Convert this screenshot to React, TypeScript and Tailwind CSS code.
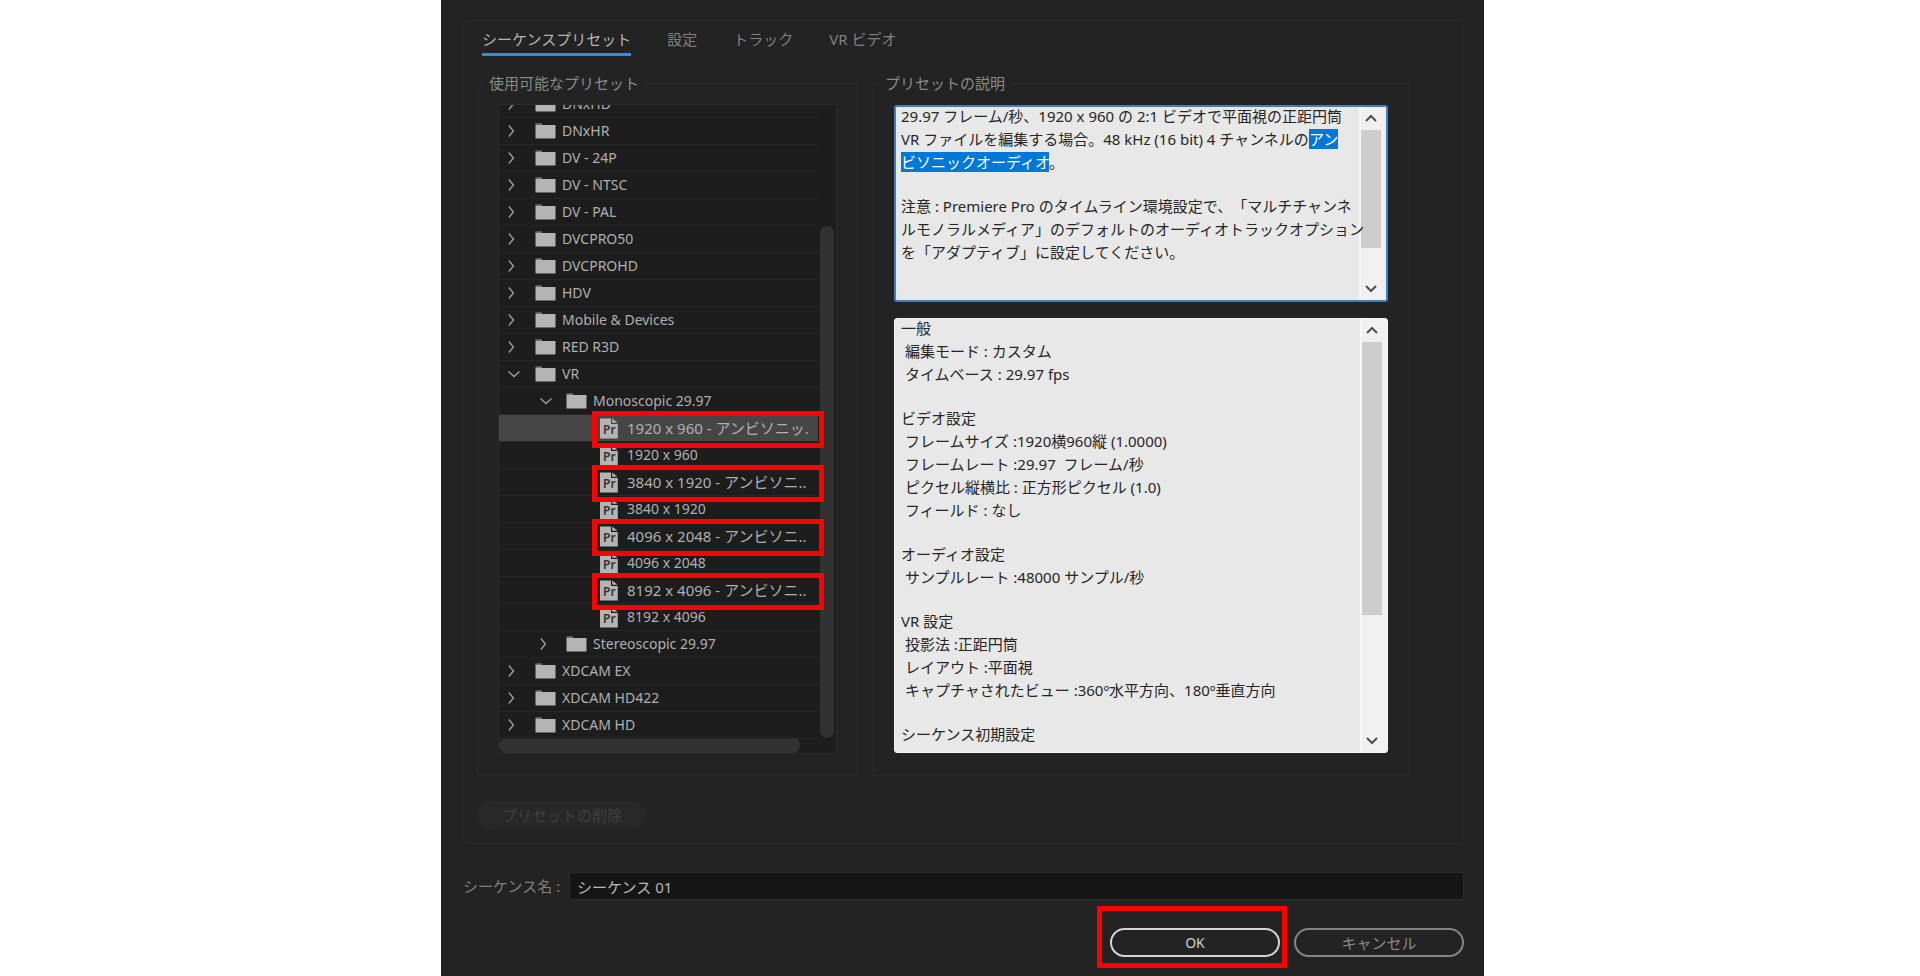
import { useState } from 'react';
import type { ReactNode } from 'react';
import clsx from 'clsx';

interface PresetRow {
  label: string;
  level: 0 | 1 | 2;
  open?: boolean;
  selected?: boolean;
  marked?: boolean;
}

const tabs = ['シーケンスプリセット', '設定', 'トラック', 'VR ビデオ'];

const presets: PresetRow[] = [
  { label: 'DNxHD', level: 0 },
  { label: 'DNxHR', level: 0 },
  { label: 'DV - 24P', level: 0 },
  { label: 'DV - NTSC', level: 0 },
  { label: 'DV - PAL', level: 0 },
  { label: 'DVCPRO50', level: 0 },
  { label: 'DVCPROHD', level: 0 },
  { label: 'HDV', level: 0 },
  { label: 'Mobile & Devices', level: 0 },
  { label: 'RED R3D', level: 0 },
  { label: 'VR', level: 0, open: true },
  { label: 'Monoscopic 29.97', level: 1, open: true },
  { label: '1920 x 960 - アンビソニッ.', level: 2, selected: true, marked: true },
  { label: '1920 x 960', level: 2 },
  { label: '3840 x 1920 - アンビソニ..', level: 2, marked: true },
  { label: '3840 x 1920', level: 2 },
  { label: '4096 x 2048 - アンビソニ..', level: 2, marked: true },
  { label: '4096 x 2048', level: 2 },
  { label: '8192 x 4096 - アンビソニ..', level: 2, marked: true },
  { label: '8192 x 4096', level: 2 },
  { label: 'Stereoscopic 29.97', level: 1 },
  { label: 'XDCAM EX', level: 0 },
  { label: 'XDCAM HD422', level: 0 },
  { label: 'XDCAM HD', level: 0 },
];

const details = [
  '一般',
  ' 編集モード : カスタム',
  ' タイムベース : 29.97 fps',
  '',
  'ビデオ設定',
  ' フレームサイズ :1920横960縦 (1.0000)',
  ' フレームレート :29.97  フレーム/秒',
  ' ピクセル縦横比 : 正方形ピクセル (1.0)',
  ' フィールド : なし',
  '',
  'オーディオ設定',
  ' サンプルレート :48000 サンプル/秒',
  '',
  'VR 設定',
  ' 投影法 :正距円筒',
  ' レイアウト :平面視',
  ' キャプチャされたビュー :360º水平方向、180º垂直方向',
  '',
  'シーケンス初期設定',
];

const indent = ['pl-[9px]', 'pl-[41px]', 'pl-[101px]'];

function Chevron({ open }: { open?: boolean }) {
  return (
    <svg className="w-3 h-3 shrink-0" viewBox="0 0 12 12" fill="none" stroke="#9c9c9c" strokeWidth="1.4">
      <path d={open ? 'M0.5 3.5L6 8.5L11.5 3.5' : 'M0.8 0.5L5.5 6L0.8 11.5'} />
    </svg>
  );
}

function FolderIcon() {
  return (
    <svg className="w-[21px] h-4 shrink-0" viewBox="0 0 21 16">
      <path d="M0.5 0.5h6.5v1.3h-6.5z" fill="#8d8d8d" />
      <path d="M0.5 2h20v13.5h-20z" fill="#b4b4b4" />
    </svg>
  );
}

function ProjectIcon() {
  return (
    <svg className="w-[18px] h-[21px] shrink-0" viewBox="0 0 18 21">
      <path d="M0 0.5h11v5.5h6.8v14.5h-17.8z" fill="#b4b4b4" />
      <path d="M12.2 0.5l5.4 4.3h-5.4z" fill="#b4b4b4" />
      <text x="3" y="16" fontFamily="Noto Sans" fontSize="12" fontWeight="600" fill="#333333">
        Pr
      </text>
    </svg>
  );
}

function TreeRow({ row }: { row: PresetRow }) {
  return (
    <li
      className={clsx(
        'relative flex items-center h-[27px] border-b border-[#272727]',
        indent[row.level],
        row.selected && 'bg-[#464646]'
      )}
    >
      {row.level === 2 ? (
        <ProjectIcon />
      ) : (
        <>
          <Chevron open={row.open} />
          <span className={clsx('shrink-0', row.level === 1 ? 'w-3.5' : 'w-[15px]')} />
          <FolderIcon />
        </>
      )}
      <span
        className={clsx(
          'whitespace-nowrap text-[#b0b0b0]',
          row.level === 2 ? 'ml-[9px]' : 'ml-1.5',
          row.marked ? 'text-[15px]' : 'text-sm'
        )}
      >
        {row.label}
      </span>
      {row.marked && (
        <span className="absolute z-10 left-[93px] -top-1 w-[232px] h-[37px] border-5 border-[#ff0000]" />
      )}
    </li>
  );
}

function Pane({ focused, thumb, children }: { focused?: boolean; thumb: string; children: ReactNode }) {
  return (
    <div
      tabIndex={0}
      className={clsx(
        'flex overflow-hidden rounded-[3px] border bg-[#e8e8e8] text-[#262626] outline-none',
        focused ? 'h-[197px] border-2 border-[#3b7fc4]' : 'h-[435px] border-[#f4f4f4]'
      )}
    >
      <div
        className={clsx(
          'relative z-10 flex-1 min-w-0 -mt-0.5 whitespace-pre leading-[23px] [text-spacing-trim:space-all]',
          focused ? 'pl-[5px]' : 'pl-1.5'
        )}
      >
        {children}
      </div>
      <div className="flex flex-col w-[27px] pr-[5px] border-l-2 border-[#f8f8f8] bg-[#f0f0f0]">
        <svg className="w-full h-[23px] shrink-0" viewBox="0 0 20 23" fill="none" stroke="#505050" strokeWidth="2">
          <path d="M5 14L10 9L15 14" />
        </svg>
        <div className={clsx('bg-[#cdcdcd]', thumb)} />
        <div className="flex-1" />
        <svg className="w-full h-[23px] shrink-0" viewBox="0 0 20 23" fill="none" stroke="#505050" strokeWidth="2">
          <path d="M5 9L10 14L15 9" />
        </svg>
      </div>
    </div>
  );
}

export default function App() {
  const [activeTab, setActiveTab] = useState(tabs[0]);
  const [sequenceName, setSequenceName] = useState('シーケンス 01');

  return (
    <div className="flex justify-center min-h-screen bg-white pl-[5px] text-[15px] font-['Noto_Sans','Noto_Sans_CJK_JP',sans-serif]">
      <main className="w-full max-w-[1043px] bg-[#232323] pt-5 pl-[22px] pr-5 text-[#8a8a8a]">
        <section className="border border-[#2c2c2c] rounded-[3px] pb-3.5">
          <nav className="flex gap-9 pl-[18px]">
            {tabs.map((tab) => (
              <button
                key={tab}
                onClick={() => setActiveTab(tab)}
                className={clsx(
                  'h-[35px] pt-1 border-b-3 leading-6',
                  tab === activeTab ? 'border-[#2d8ceb] text-[#b4b4b4]' : 'border-transparent text-[#808080]'
                )}
              >
                {tab}
              </button>
            ))}
          </nav>

          <div className="flex gap-[15px] mt-4 pl-[13px] pr-[53px]">
            <fieldset className="w-[381px] shrink-0 border border-[#2c2c2c] rounded-[4px] px-5 pt-2.5 pb-[21px]">
              <legend className="-ml-[15px] px-1.5 leading-[22px]">使用可能なプリセット</legend>
              <div className="flex flex-col h-[650px] overflow-hidden border border-[#2c2c2c] rounded-[3px] bg-[#1d1d1d]">
                <div className="flex flex-1 min-h-0 gap-0.5 pr-0.5">
                  <ul className="flex-1 min-w-0 -mt-3.5">
                    {presets.map((row) => (
                      <TreeRow key={row.label} row={row} />
                    ))}
                  </ul>
                  <div className="w-3.5 mt-[121px] rounded-full bg-[#323232]" />
                </div>
                <div className="w-[301px] h-[15px] rounded-full bg-[#323232]" />
              </div>
            </fieldset>

            <fieldset className="flex-1 min-w-0 border border-[#2c2c2c] rounded-[4px] pl-5 pr-[21px] pt-2.5 pb-[21px]">
              <legend className="-ml-[15px] px-1.5 leading-[22px]">プリセットの説明</legend>
              <div className="flex flex-col gap-4 pt-px">
                <Pane focused thumb="h-[118px]">
                  <p>29.97 フレーム/秒、1920 x 960 の 2:1 ビデオで平面視の正距円筒</p>
                  <p>
                    VR ファイルを編集する場合。48 kHz (16 bit) 4 チャンネルの
                    <mark className="bg-[#0078d7] text-white">アン</mark>
                  </p>
                  <p>
                    <mark className="bg-[#0078d7] text-white">ビソニックオーディオ</mark>。
                  </p>
                  <p className="h-[21px]" />
                  <p>注意 : Premiere Pro のタイムライン環境設定で、「マルチチャンネ</p>
                  <p>ルモノラルメディア」のデフォルトのオーディオトラックオプション</p>
                  <p>を「アダプティブ」に設定してください。</p>
                </Pane>
                <Pane thumb="h-[273px]">
                  {details.map((line, i) => (
                    <p key={i} className={line ? 'h-[23px]' : 'h-[21px]'}>
                      {line}
                    </p>
                  ))}
                </Pane>
              </div>
            </fieldset>
          </div>

          <button
            disabled
            className="block w-[170px] h-7 mt-[25px] ml-[13px] rounded-full bg-[#282828] text-[#404040] leading-6"
          >
            プリセットの削除
          </button>
        </section>

        <div className="flex items-center mt-7">
          <label htmlFor="sequence-name" className="w-[106px] shrink-0 whitespace-pre text-[#808080]">
            シーケンス名 :
          </label>
          <input
            id="sequence-name"
            value={sequenceName}
            onChange={(e) => setSequenceName(e.target.value)}
            className="flex-1 min-w-0 h-7 px-[7px] border border-[#2c2c2c] rounded-[3px] bg-[#151515] text-[#b8b8b8] outline-none"
          />
        </div>

        <div className="flex justify-end gap-3.5 mt-7">
          <div className="relative">
            <button className="w-[170px] h-[29px] rounded-full border-2 border-[#d4d4d4] text-sm text-[#d0d0d0]">OK</button>
            <span className="absolute -left-[13px] -right-[7px] -top-[22px] -bottom-[11px] border-5 border-[#ff0000] pointer-events-none" />
          </div>
          <button className="w-[170px] h-[29px] rounded-full border-2 border-[#848484] leading-6">キャンセル</button>
        </div>
      </main>
    </div>
  );
}
